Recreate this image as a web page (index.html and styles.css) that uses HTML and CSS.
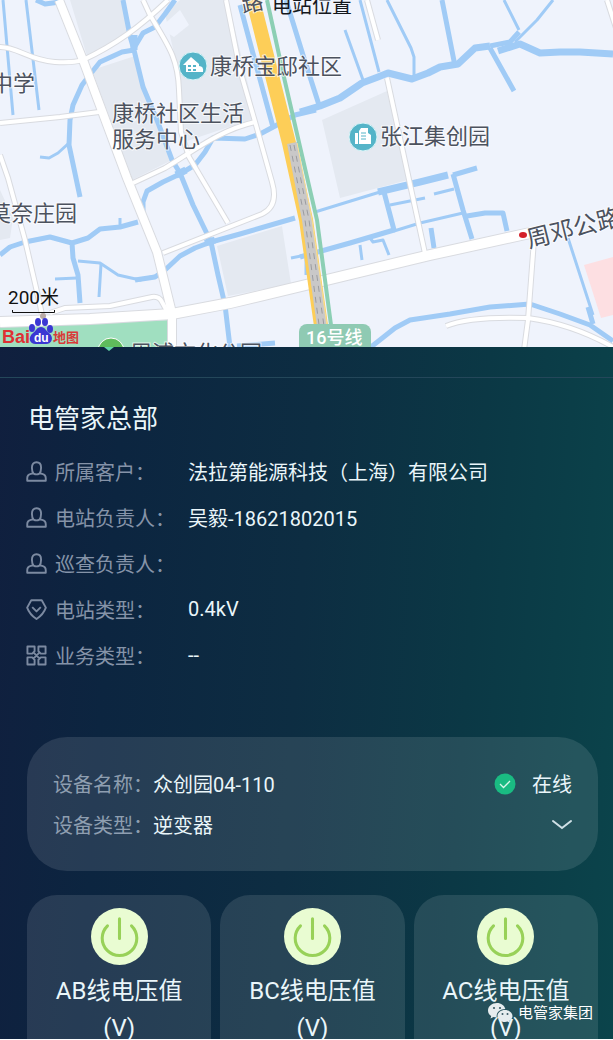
FILE: index.html
```html
<!DOCTYPE html>
<html lang="zh-CN">
<head>
    <meta charset="UTF-8">
    <meta name="viewport" content="width=device-width, initial-scale=1.0">
    <title>电站位置</title>
    <link rel="stylesheet" href="styles.css">
</head>
<body>
    <!-- Shared icons -->
    <svg class="sprite" aria-hidden="true">
        <symbol id="icon-user" viewBox="0 0 22 22">
            <path d="M8 13.200C6.700 11.800 6.200 9.500 6.200 7 6.200 3.500 8 1.300 11 1.300s4.800 2.200 4.800 5.700c0 2.500-.5 4.800-1.800 6.200-1.800 1-4.200 1-6 0ZM8 12.800 5 13.500C2.500 14.100 1.300 15.500 1.300 18v2.700h19.400V18c0-2.500-1.200-3.900-3.700-4.500l-3-.7"/>
        </symbol>
        <symbol id="icon-type" viewBox="0 0 22 22">
            <path d="M5.500 1.300h11L20.800 9C19 14 15.500 18 11 21 6.500 18 3 14 1.200 9ZM6.500 8.500l4.500 4.500 4.500-4.500"/>
        </symbol>
        <symbol id="icon-grid" viewBox="0 0 22 22">
            <path d="M1.500 1.500h7.500v5L6.500 9h-5ZM13 1.500h7.500V9h-5L13 6.500ZM1.500 13h5L9 15.500v5H1.500ZM15.500 13h5v7.500H13v-5ZM8 8l6 6M14 8l-6 6"/>
        </symbol>
        <symbol id="icon-power" viewBox="0 0 56 56">
            <circle cx="28" cy="28" r="28" fill="#e9fcd2"/>
            <path d="M16.200 17.500a17 17 0 1 0 23.600 0M28 10.500v19.500" fill="none" stroke="#98d158" stroke-width="3" stroke-linecap="round"/>
        </symbol>
    </svg>

    <main class="app">
        <svg class="map" viewBox="0 0 613 351" role="img" aria-label="电站位置地图">
            <defs>
                <clipPath id="map-area"><rect width="613" height="347"/></clipPath>
                <g id="roads">
                    <path class="r4" d="M50 313 65 308 110 306 152 297Q159 296 162 302L168 313"/>
                    <path class="r4" d="M0 155 8 178 25 240 40 305 43 320"/>
                    <path class="r4" d="M0 47C18 47 28 60 55 62Q73 63 83 60C115 45 140 27 168 0"/>
                    <path class="r4" d="M0 123 60 117 99 112"/>
                    <path class="r4" d="M143 0 150 15C168 45 178 58 179 90L181 132 189 157 228 223"/>
                    <path class="r4" d="M226 0 240 70 256 125 272 182Q279 206 262 214L163 253"/>
                    <path class="r4" d="M255 122C220 130 195 150 165 168L133 183"/>
                    <path class="r4" d="M387 78 408 175 426 258"/>
                    <path class="r4" d="M367 0 378 40"/>
                    <path class="r4" d="M534 240 528 320 524 350"/>
                    <path class="r4" d="M446 326Q470 316 528 318 572 324 613 347"/>
                    <path class="r4" d="M607 0 616 28"/>
                    <path class="r8" d="M59 0 83 60 127 178 157 252 172 313V350"/>
                    <path class="r10" d="M0 322 90 319 172 314 230 303 310 284 430 255 530 233"/>
                </g>
            </defs>

            <g clip-path="url(#map-area)">
                <rect class="land" width="613" height="347"/>

                <g class="block">
                    <path d="M70 0H122L130 32 87 56ZM92 70 135 56 172 160 132 180ZM165 14 180 0H228L256 118 184 142 179 75ZM322 120 387 91 408 180 340 198ZM217 246 282 226 291 284 228 296ZM0 190 13 218 10 238 0 240Z"/>
                </g>
                <path class="land" d="M160 28 180 10 189 25 174 37Z"/>
                <path class="park" d="M0 326 170 320V347H0Z"/>
                <path class="mall" d="M584 265 613 257V315L601 318Z"/>

                <g class="water">
                    <path class="w3" d="M3 0 13 115M26 0 39 110M69 143 58 153 49 158 40 157M120 226V218M101 264 99 297M55 279 77 278M345 30 363 80M360 0 379 72M519 30 504 0M360 245 362 260M370 238 373 242 383 240 389 255M434 194 454 189M390 205 425 198M568 238 593 315M315 212 380 192"/>
                    <path class="w3" d="M78 261 100 263 118 275 140 280 155 276M515 42 537 20 553 0M394 231 420 223 463 213M306 275V255L291 258M387 0 411 48 414 57V78"/>
                    <path class="w5" d="M36 0 45 4 60 2M123 0 130 36 134 50 143 87 157 120 172 160 180 173M134 50 122 52 100 62 92 72 82 85 73 105 70 120 69 145 80 197M134 48 143 33 155 27 165 14 175 0"/>
                    <path class="w5" d="M316 110 295 115 277 125 260 134 245 139 213 138 205 152 195 165 180 174 163 182 147 191 143 202V215M138 222 120 227 100 229 88 238 72 243 50 237 25 242 10 247 0 255M72 243 73 258 78 275 80 303"/>
                    <path class="w5" d="M135 280 155 277 165 270 180 256 195 248 211 242M180 173 193 205 211 242 240 234 295 218M211 242 218 275 225 305 230 347"/>
                    <path class="w5" d="M240 5 252 50 273 127M286 0 303 55 319 105M442 0 455 66M490 48 514 91M384 192 394 230 350 243 300 257M453 174 463 210 472 239M467 216 485 213 503 213 507 231M431 228 434 248"/>
                    <path class="w5" d="M371 347 395 328 410 320 450 314 490 307 530 304 560 314 590 325 613 341M588 307 593 324M237 346 275 343"/>
                    <path class="w7" d="M300 112 320 106 340 98 362 83 378 77 388 73 412 79 428 73 440 67 458 64 475 48 490 46M498 51 520 44 540 53 560 52 580 52 613 54M378 192 420 182 448 175M134 35V50M176 175 186 170M205 243 215 240"/>
                    <path class="w5" d="M453 175 477 168M490 46 510 42 519 32"/>
                </g>

                <use class="casing" href="#roads"/>
                <use class="surface" href="#roads"/>

                <!-- Highway and metro line -->
                <path class="metro" d="M267 0 283 73 307 177 317 220 333 340"/>
                <path class="highway" d="M253 0 289 143 306 220 324 347"/>
                <path class="viaduct" d="M292 143 307 220 325 347"/>
                <path class="viaduct-edge" d="M297 143 312 220 330 347"/>
                <path class="viaduct-lane" d="M290 145 305 220 322 347M294 145 309 220 327 347"/>

                <circle class="poi" cx="193" cy="66" r="14"/>
                <path class="poi-glyph" d="M183 65 191 57 199 64V66Q204 66 203 72H186V65Z"/>
                <path class="poi-window" d="M188 65h3v2h-3zM193 65h3v2h-3zM188 69h3v2h-3zM193 69h3v2h-3z"/>
                <circle class="poi" cx="363" cy="137" r="14"/>
                <path class="poi-glyph" d="M355 144V133H358V144ZM359 144V131L361 128H368V133L371 135V144Z"/>
                <path class="poi-line" d="M361 133h5M361 136h5M361 139h5"/>

                <g class="label">
                    <text x="210" y="74">康桥宝邸社区</text>
                    <text x="112" y="121">康桥社区生活</text>
                    <text x="112" y="147">服务中心</text>
                    <text x="380" y="144">张江集创园</text>
                    <text x="-11" y="221">莫奈庄园</text>
                    <text x="-9" y="91">中学</text>
                    <text x="130" y="361">周浦文化公园</text>
                    <text class="road-name" transform="translate(529 248) rotate(-14)">周邓公路</text>
                    <text transform="translate(243 13) rotate(-12)">路</text>
                </g>
                <ellipse cx="523" cy="235" rx="4" ry="3" fill="#d41f28"/>
                <text class="map-title" x="272" y="13">电站位置</text>

                <rect class="line-badge" x="299" y="324" width="72" height="32" rx="8"/>
                <text class="line-name" x="306" y="344">16号线</text>
                <circle cx="111" cy="351" r="13" fill="#5fbb5c" stroke="#fff"/>

                <!-- Scale and map provider -->
                <text class="scale" x="8" y="304">200米</text>
                <path d="M12.500 310V312.500H54.500V310" fill="none" stroke="#111"/>
                <circle cx="43" cy="316" r="3" fill="#b8a9a5"/>
                <text class="brand-red" x="2" y="343">Bai</text>
                <g class="paw">
                    <ellipse cx="32" cy="328" rx="3" ry="4"/>
                    <ellipse cx="38" cy="322" rx="3" ry="4"/>
                    <ellipse cx="45" cy="322" rx="3" ry="4"/>
                    <ellipse cx="50" cy="329" rx="3" ry="4"/>
                    <path d="M41 327C45 327 46 331 49 333 55 338 51 345 45 344H37C30 345 27 338 33 333 36 331 37 327 41 327Z"/>
                </g>
                <text class="brand-du" x="34" y="342">du</text>
                <text class="brand-cn" x="53" y="342">地图</text>
            </g>
            <path d="M104 347H114L109 351Z" fill="#62d3a6"/>
        </svg>

        <section class="station">
            <h1>电管家总部</h1>
            <dl>
                <div class="info-row">
                    <dt><svg class="icon"><use href="#icon-user"/></svg>所属客户：</dt>
                    <dd>法拉第能源科技（上海）有限公司</dd>
                </div>
                <div class="info-row">
                    <dt><svg class="icon"><use href="#icon-user"/></svg>电站负责人：</dt>
                    <dd>吴毅-18621802015</dd>
                </div>
                <div class="info-row">
                    <dt><svg class="icon"><use href="#icon-user"/></svg>巡查负责人：</dt>
                    <dd></dd>
                </div>
                <div class="info-row">
                    <dt><svg class="icon"><use href="#icon-type"/></svg>电站类型：</dt>
                    <dd>0.4kV</dd>
                </div>
                <div class="info-row">
                    <dt><svg class="icon"><use href="#icon-grid"/></svg>业务类型：</dt>
                    <dd>--</dd>
                </div>
            </dl>
        </section>

        <section class="device">
            <div class="device-row">
                <p><span class="device-label">设备名称：</span>众创园04-110</p>
                <span class="status">
                    <svg class="status-icon" viewBox="0 0 22 22" aria-hidden="true">
                        <circle cx="11" cy="11" r="10.500" fill="#1abb82"/>
                        <path d="M6 11l3.500 3.500L16 8" fill="none" stroke="#d9f7ea" stroke-width="1.300"/>
                    </svg>
                    在线
                </span>
            </div>
            <div class="device-row">
                <p><span class="device-label">设备类型：</span>逆变器</p>
                <button class="expand" type="button" aria-label="展开">
                    <svg viewBox="0 0 20 12" aria-hidden="true"><path d="M1 2l9 7 9-7"/></svg>
                </button>
            </div>
        </section>

        <section class="metrics">
            <article class="metric">
                <svg class="power"><use href="#icon-power"/></svg>
                <h2>AB线电压值<br>(V)</h2>
            </article>
            <article class="metric">
                <svg class="power"><use href="#icon-power"/></svg>
                <h2>BC线电压值<br>(V)</h2>
            </article>
            <article class="metric">
                <svg class="power"><use href="#icon-power"/></svg>
                <h2>AC线电压值<br>(V)</h2>
            </article>
        </section>

        <div class="watermark">
            <svg viewBox="0 0 26 20" aria-hidden="true">
                <path d="M9 0C4 0 0 3.300 0 7.400c0 2.300 1.200 4.200 3.200 5.600L2.500 15.500l3-1.500c1 .3 2 .5 3.200.5C8 9.500 12 6 17.300 6 16.500 2.500 13 0 9 0Z"/>
                <path d="M17 7c-4.300 0-7.500 2.700-7.500 6s3.200 6 7.500 6c.9 0 1.800-.2 2.600-.4l2.600 1.400-.7-2.300C23.200 16.600 24.500 15 24.500 13c0-3.300-3.200-6-7.500-6Z"/>
                <g fill="#3b5a66"><circle cx="6" cy="5" r="1.100"/><circle cx="12" cy="5" r="1.100"/><circle cx="14.500" cy="11" r="1"/><circle cx="19.500" cy="11" r="1"/></g>
            </svg>
            电管家集团
        </div>
    </main>
</body>
</html>
```

FILE: styles.css
```css
* {
    box-sizing: border-box;
}
body {
    margin: 0;
    background-color: #fff;
    font-family: Roboto, "Noto Sans CJK SC", sans-serif;
    font-size: 20px;
    color: #eaf6fa;
}
h1, h2, p, dl, dd {
    margin: 0;
    font-weight: 400;
}
.sprite {
    position: absolute;
    width: 0;
    height: 0;
}
.app {
    position: relative;
    height: calc(100vh - 1px);
    overflow: hidden;
    background: linear-gradient(94deg, #111e3e 0%, #0c2540 22%, #0d2d42 50%, #0b3845 75%, #0b444b 100%);
}

/* Map */
.map {
    display: block;
    width: 100%;
    height: auto;
    margin-bottom: -4px;
    font-family: Roboto, "Noto Sans CJK SC", sans-serif;
}
.land {
    fill: #eff3fc;
}
.block {
    fill: #e4e9f1;
}
.park {
    fill: #a0dfc0;
}
.mall {
    fill: #fddfe2;
}
.water {
    fill: none;
    stroke: #a0cbf6;
    stroke-linejoin: round;
}
.w3 {
    stroke-width: 3px;
}
.w5 {
    stroke-width: 5px;
}
.w7 {
    stroke-width: 7px;
}
.casing {
    --edge: 2px;
    fill: none;
    stroke: #d9dbe0;
}
.surface {
    --edge: 0px;
    fill: none;
    stroke: #fff;
}
.r4 {
    stroke-width: calc(4px + var(--edge));
}
.r8 {
    stroke-width: calc(8px + var(--edge));
}
.r10 {
    stroke-width: calc(10px + var(--edge));
}
.metro {
    fill: none;
    stroke: #8ccfb4;
    stroke-width: 4px;
}
.highway {
    fill: none;
    stroke: #fdce58;
    stroke-width: 14px;
}
.viaduct {
    fill: none;
    stroke: #c9c8c8;
    stroke-width: 10px;
}
.viaduct-edge {
    fill: none;
    stroke: #f6dc94;
}
.viaduct-lane {
    fill: none;
    stroke: #9b9ca0;
    stroke-dasharray: 6 5;
}
.poi {
    fill: #54b4c8;
    stroke: #d9f5f8;
    stroke-width: 1px;
}
.poi-glyph {
    fill: #fff;
}
.poi-window {
    fill: #54b4c8;
}
.poi-line {
    stroke: #54b4c8;
}
.label {
    fill: #4c525e;
    font-size: 22px;
    stroke: #fff;
    stroke-width: 2px;
    stroke-opacity: 0.7;
    paint-order: stroke;
}
.road-name {
    font-size: 24px;
}
.map-title {
    font-size: 20px;
    fill: #15181d;
}
.line-badge {
    fill: #8fcab3;
}
.line-name {
    font-size: 18px;
    font-weight: 500;
    fill: #fff;
}
.scale {
    font-size: 19px;
    fill: #111;
}
.brand-red {
    font: bold 18px "Liberation Sans", sans-serif;
    fill: #df3034;
}
.brand-cn {
    font-size: 13px;
    font-weight: 700;
    fill: #d93a38;
}
.brand-du {
    font: bold 12px "Liberation Sans", sans-serif;
    fill: #fff;
}
.paw {
    fill: #3b37d3;
}

/* Station info */
.station {
    margin-top: 30px;
    padding: 21px 26px 0;
    border-top: 1px solid #24475a;
}
.station h1 {
    margin-bottom: 9px;
    padding-left: 2px;
    font-size: 26px;
    line-height: 40px;
}
.info-row {
    display: flex;
    align-items: center;
    height: 46px;
}
.info-row dt {
    display: flex;
    flex: none;
    align-items: center;
    gap: 8px;
    width: 162px;
    color: #8593a8;
    white-space: nowrap;
}
.icon {
    flex: none;
    width: 21px;
    height: 21px;
    fill: none;
    stroke: #7c8aa1;
    stroke-width: 2px;
    stroke-linejoin: round;
}

/* Device card */
.device {
    margin: 59px 15px 24px 27px;
    padding: 26px 26px;
    border-radius: 40px;
    background-color: rgba(255, 255, 255, 0.11);
}
.device-row {
    display: flex;
    align-items: center;
    justify-content: space-between;
    height: 41px;
}
.device-label {
    color: #8e9eb0;
}
.status {
    display: flex;
    align-items: center;
    gap: 16px;
}
.status-icon {
    width: 22px;
    height: 22px;
}
.expand {
    padding: 0;
    border: 0;
    background: none;
    cursor: pointer;
}
.expand svg {
    display: block;
    width: 20px;
    height: 12px;
    fill: none;
    stroke: #cfe0e6;
    stroke-width: 2px;
    stroke-linecap: round;
}

/* Voltage cards */
.metrics {
    display: grid;
    grid-template-columns: repeat(3, 1fr);
    gap: 9px;
    margin: 0 15px 0 27px;
}
.metric {
    display: flex;
    flex-direction: column;
    align-items: center;
    gap: 8px;
    padding: 13px 8px 24px;
    border-radius: 30px;
    background-color: rgba(255, 255, 255, 0.11);
}
.power {
    width: 57px;
    height: 57px;
}
.metric h2 {
    font-size: 24px;
    line-height: 37px;
    text-align: center;
}
.watermark {
    position: absolute;
    right: 20px;
    bottom: 15px;
    display: flex;
    align-items: center;
    gap: 4px;
    font-size: 15px;
    line-height: 22px;
    color: #fff;
}
.watermark svg {
    width: 26px;
    height: 20px;
    fill: #e6ecef;
}
```
